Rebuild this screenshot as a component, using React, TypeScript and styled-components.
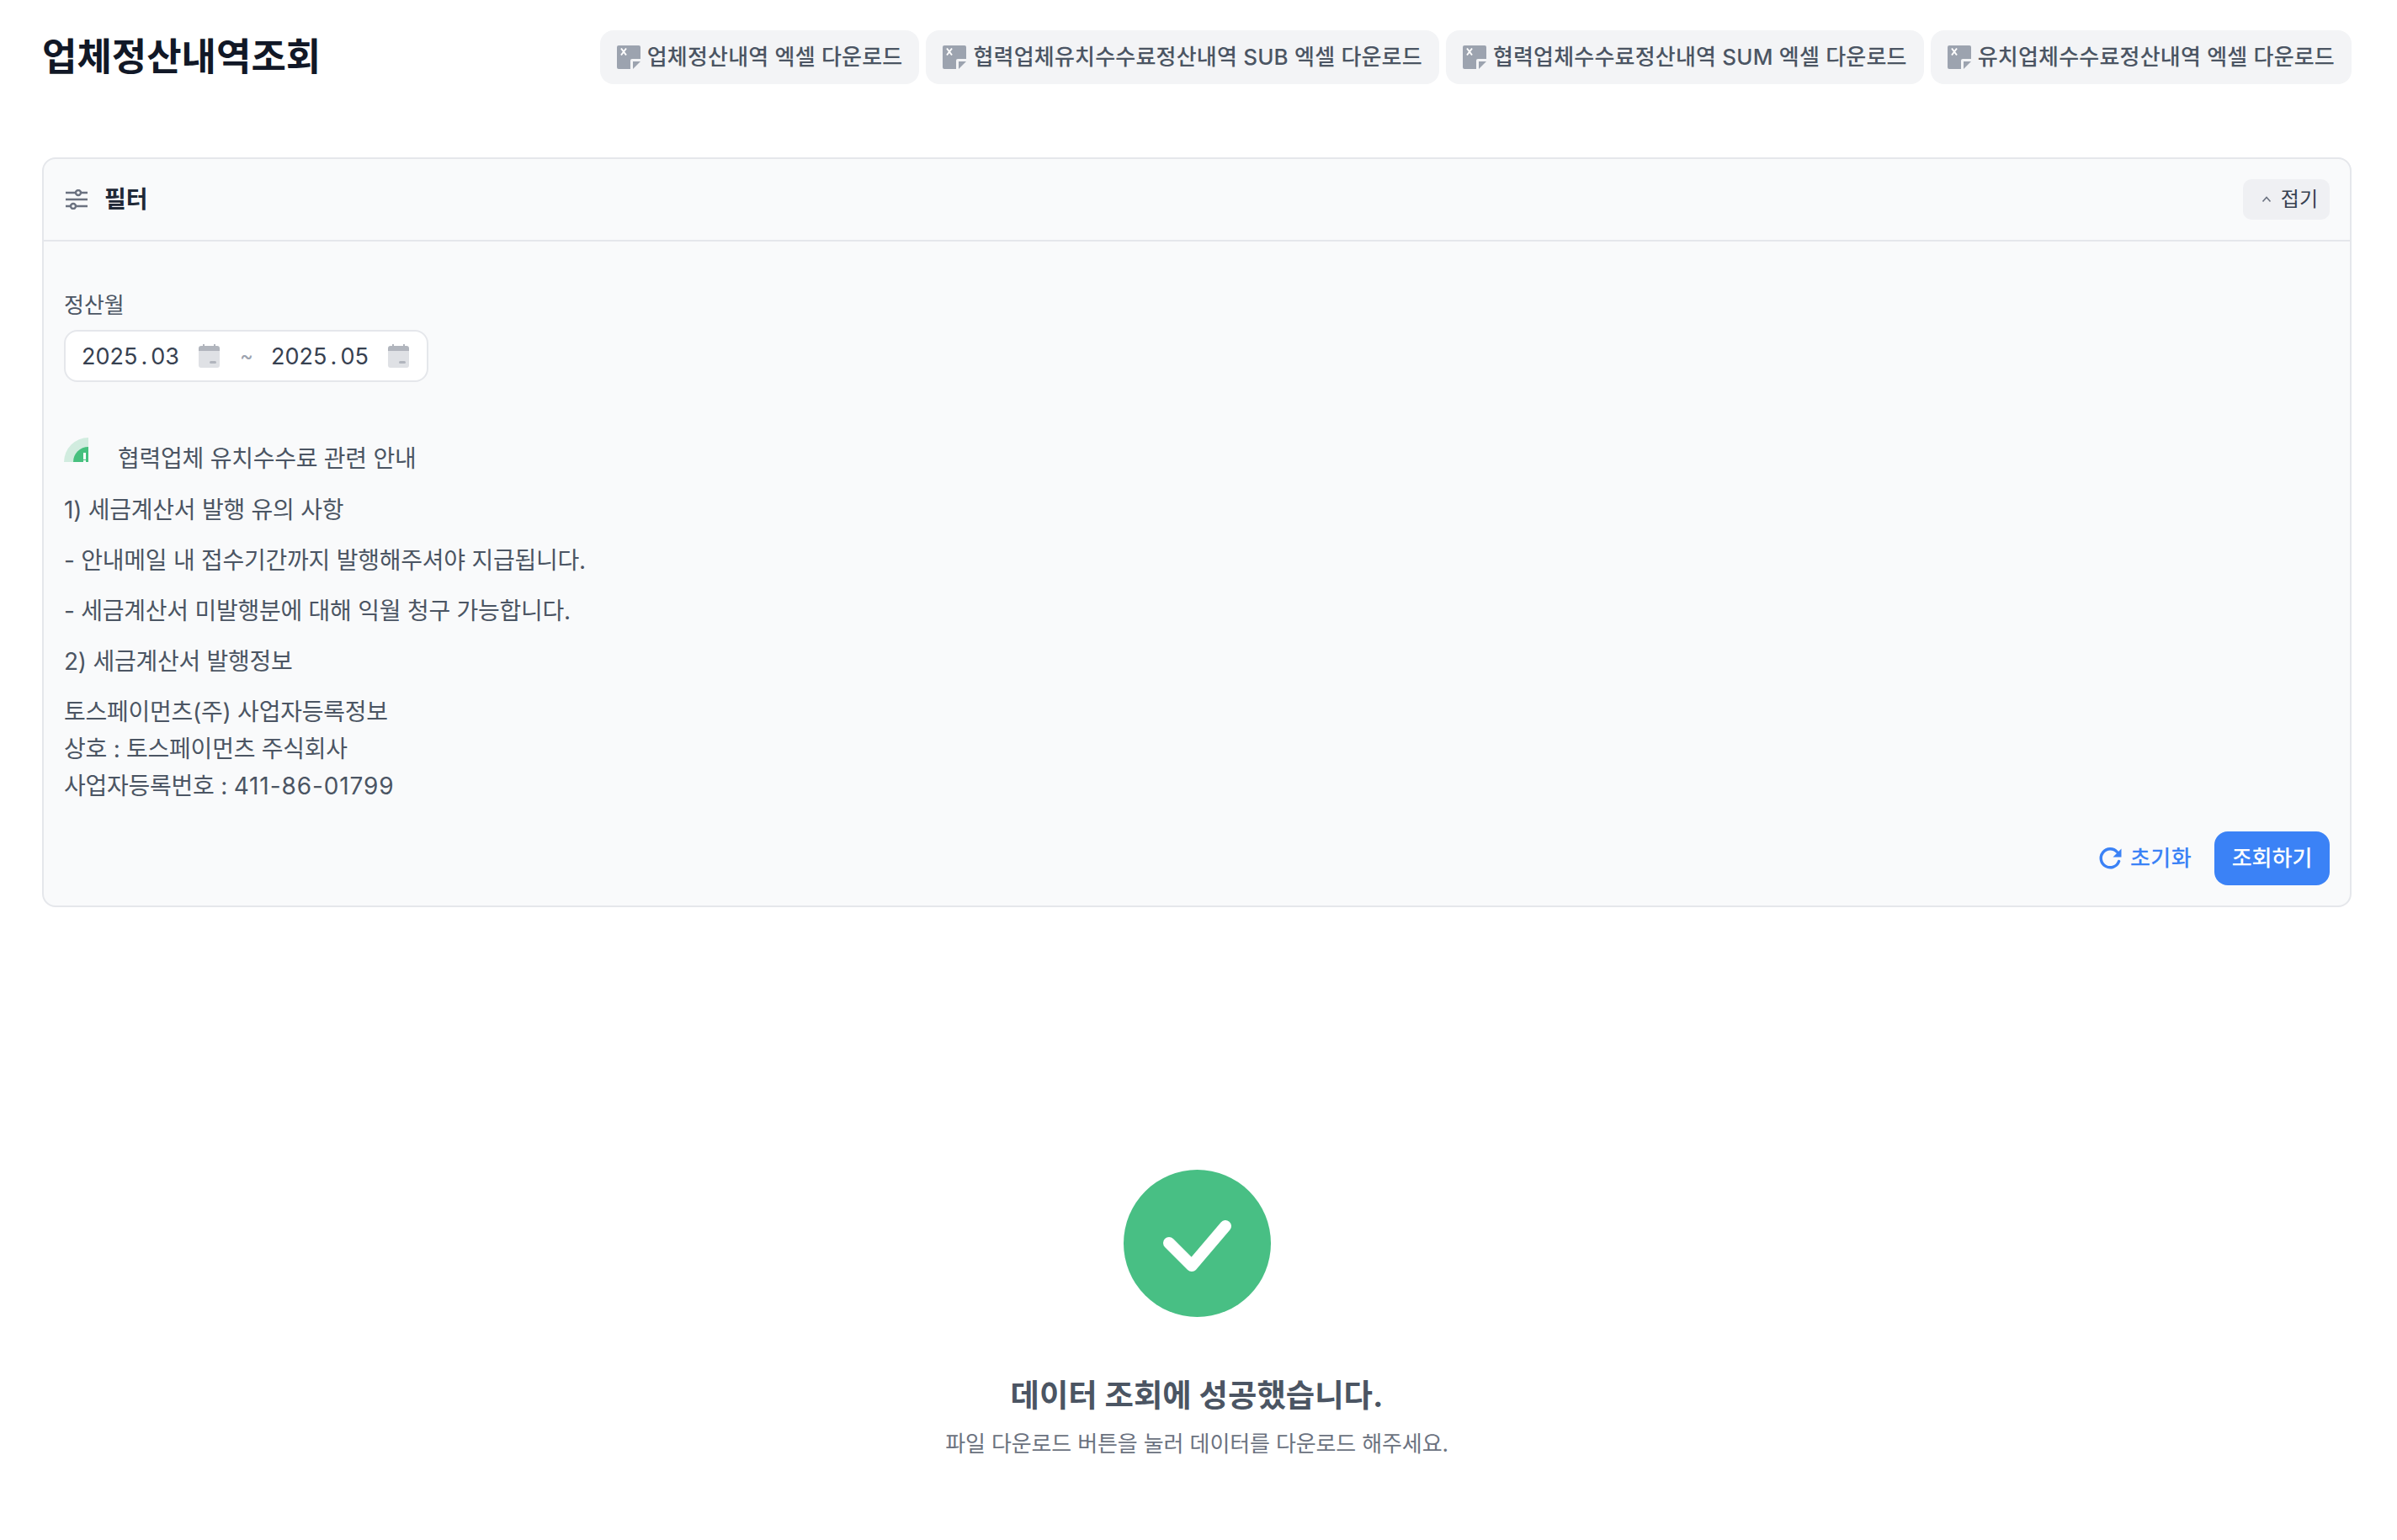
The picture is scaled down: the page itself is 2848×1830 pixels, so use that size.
import React from "react";
import styled, { createGlobalStyle } from "styled-components";

const GlobalStyle = createGlobalStyle`
  html, body {
    margin: 0;
    padding: 0;
    background: #fff;
  }
  * {
    box-sizing: border-box;
  }
  body {
    font-family: Inter, "Noto Sans CJK KR", sans-serif;
    -webkit-font-smoothing: antialiased;
  }
`;

const Page = styled.div`
  width: 2848px;
  height: 1830px;
  padding: 36px 54px 0 50px;
`;

const TopBar = styled.header`
  display: flex;
  justify-content: space-between;
  align-items: center;
  height: 64px;
`;

const Title = styled.h1`
  margin: 0;
  font-size: 45px;
  font-weight: 700;
  line-height: 64px;
  color: #111827;
`;

const Downloads = styled.div`
  display: flex;
  gap: 8px;
`;

const DownloadButton = styled.button`
  display: flex;
  align-items: center;
  gap: 8px;
  height: 64px;
  padding: 0 20px;
  border: none;
  border-radius: 16px;
  background: #f3f4f6;
  color: #4b5563;
  font: 500 26px/40px Inter, "Noto Sans CJK KR", sans-serif;
  letter-spacing: 0.2px;
  white-space: nowrap;
`;

const FilterCard = styled.section`
  margin-top: 87px;
  height: 891px;
  border: 2px solid #e5e7eb;
  border-radius: 16px;
  background: #f9fafb;
  display: flex;
  flex-direction: column;
`;

const FilterHeader = styled.div`
  display: flex;
  justify-content: space-between;
  align-items: center;
  height: 98px;
  flex: none;
  padding: 0 24px 0 26px;
  border-bottom: 2px solid #e5e7eb;
`;

const FilterTitle = styled.div`
  display: flex;
  align-items: center;
  gap: 20px;
  font-size: 28px;
  font-weight: 600;
  line-height: 40px;
  color: #1f2937;
`;

const CollapseButton = styled.button`
  display: flex;
  align-items: center;
  gap: 10px;
  height: 48px;
  padding: 0 14px 0 21px;
  border: none;
  border-radius: 10px;
  background: #eff0f3;
  color: #374151;
  font: 400 24px/32px Inter, "Noto Sans CJK KR", sans-serif;
`;

const FilterBody = styled.div`
  flex: 1;
  display: flex;
  flex-direction: column;
  padding: 62px 24px 24px;
`;

const FieldLabel = styled.label`
  display: block;
  font-size: 26px;
  line-height: 28px;
  color: #4b5563;
`;

const DateRange = styled.div`
  display: flex;
  align-items: center;
  width: 433px;
  height: 62px;
  margin-top: 15px;
  padding: 0 19px;
  border: 2px solid #e5e7eb;
  border-radius: 16px;
  background: #fff;
`;

const MonthValue = styled.span`
  width: 116px;
  margin-top: 2px;
  display: flex;
  justify-content: space-between;
  font-size: 27px;
  line-height: 40px;
  color: #374151;
`;

const Tilde = styled.span`
  width: 61px;
  padding-left: 24px;
  font-size: 24px;
  line-height: 40px;
  color: #9ca3af;
`;

const Notice = styled.div`
  margin-top: 66px;
  color: #4b5563;
  font-size: 28px;
  line-height: 44px;
  letter-spacing: -0.25px;
`;

const NoticeHead = styled.div`
  display: flex;
  align-items: flex-start;
  gap: 35px;
  height: 44px;
  margin-bottom: 20px;
`;

const NoticeHeadText = styled.span`
  margin-top: 3px;
`;

const NoticeLine = styled.p`
  margin: 0 0 16px;
`;

const BusinessNumber = styled.span`
  letter-spacing: 0.9px;
`;

const Actions = styled.div`
  margin-top: auto;
  display: flex;
  justify-content: flex-end;
  align-items: center;
  gap: 27px;
`;

const ResetButton = styled.button`
  display: flex;
  align-items: center;
  gap: 9px;
  padding: 0;
  border: none;
  background: none;
  color: #3b82f6;
  font: 500 26px/40px Inter, "Noto Sans CJK KR", sans-serif;
  letter-spacing: 0.4px;
`;

const SearchButton = styled.button`
  width: 137px;
  height: 64px;
  border: none;
  border-radius: 16px;
  background: #3b82f6;
  color: #fff;
  font: 500 26px/40px Inter, "Noto Sans CJK KR", sans-serif;
`;

const Result = styled.div`
  display: flex;
  flex-direction: column;
  align-items: center;
  margin-top: 312px;
`;

const ResultTitle = styled.h2`
  margin: 66px 0 0;
  font-size: 37.4px;
  line-height: 56px;
  font-weight: 700;
  color: #4b5563;
`;

const ResultText = styled.p`
  margin: 5px 0 0;
  font-size: 26px;
  line-height: 48px;
  letter-spacing: -0.13px;
  color: #6b7280;
`;

const CalendarSvg = styled.svg`
  flex: none;
  margin-left: 23px;
`;

const ExcelIcon = () => (
  <svg width="28" height="28" viewBox="0 0 28 28">
    <path d="M2 0h24a2 2 0 0 1 2 2v14H18a2 2 0 0 0-2 2v10H2a2 2 0 0 1-2-2V2a2 2 0 0 1 2-2z" fill="#9ca3af" />
    <path d="M19 19h9l-9 9z" fill="#9ca3af" />
    <path d="M5 3.5l6 8M11 3.5l-6 8" stroke="#fff" strokeWidth="2" fill="none" />
  </svg>
);

const SlidersIcon = () => (
  <svg width="26" height="24" viewBox="0 0 26 24" fill="none" stroke="#6b7280" strokeWidth="2.4">
    <path d="M0 4h26M0 12h26M0 20h26" />
    <circle cx="15" cy="4" r="3" fill="#f9fafb" />
    <circle cx="9" cy="20" r="3" fill="#f9fafb" />
  </svg>
);

const ChevronIcon = () => (
  <svg width="14" height="14" viewBox="0 0 14 14" fill="none" stroke="#6b7280" strokeWidth="1.6">
    <path d="M2.5 9.5L7 4.5l4.5 5" />
  </svg>
);

const CalendarIcon = () => (
  <CalendarSvg width="25" height="28" viewBox="0 0 25 28">
    <path d="M0 8h25v17a3 3 0 0 1-3 3H3a3 3 0 0 1-3-3z" fill="#dfe1e5" />
    <path d="M0 8V5a3 3 0 0 1 3-3h2V0h2v2h11V0h2v2h2a3 3 0 0 1 3 3v3z" fill="#b1b5bd" />
    <rect x="13" y="20" width="8" height="3" rx="1.5" fill="#b1b5bd" />
  </CalendarSvg>
);

const NoticeIcon = () => (
  <svg width="29" height="29" viewBox="0 0 29 29">
    <path d="M29 0v29H0A29 29 0 0 1 29 0z" fill="#d1ecdf" />
    <path d="M29 11v18H11a18 18 0 0 1 18-18z" fill="#46c07e" />
    <rect x="23" y="18" width="3" height="8" fill="#fff" />
    <rect x="23" y="27" width="3" height="2" fill="#fff" />
  </svg>
);

const RefreshIcon = () => (
  <svg width="28" height="28" viewBox="0 0 28 28" fill="none">
    <path d="M23.6 17.5A11 11 0 1 1 21.5 6.5" stroke="#3b82f6" strokeWidth="3.4" strokeLinecap="round" />
    <path d="M26.5 2.5v10h-10z" fill="#3b82f6" />
  </svg>
);

const SuccessIcon = () => (
  <svg width="175" height="175" viewBox="0 0 175 175">
    <circle cx="87.5" cy="87.5" r="87.5" fill="#48bf84" />
    <path d="M54 87l27 27 40-47" fill="none" stroke="#fff" strokeWidth="14" strokeLinecap="round" strokeLinejoin="round" />
  </svg>
);

const downloads = [
  "업체정산내역 엑셀 다운로드",
  "협력업체유치수수료정산내역 SUB 엑셀 다운로드",
  "협력업체수수료정산내역 SUM 엑셀 다운로드",
  "유치업체수수료정산내역 엑셀 다운로드",
];

const Month = ({ year, month }: { year: string; month: string }) => (
  <MonthValue>
    <span>{year}</span>
    <span>.</span>
    <span>{month}</span>
  </MonthValue>
);

export default function App() {
  return (
    <Page>
      <GlobalStyle />
      <TopBar>
        <Title>업체정산내역조회</Title>
        <Downloads>
          {downloads.map((label) => (
            <DownloadButton key={label}>
              <ExcelIcon />
              {label}
            </DownloadButton>
          ))}
        </Downloads>
      </TopBar>

      <FilterCard>
        <FilterHeader>
          <FilterTitle>
            <SlidersIcon />
            필터
          </FilterTitle>
          <CollapseButton>
            <ChevronIcon />
            접기
          </CollapseButton>
        </FilterHeader>
        <FilterBody>
          <FieldLabel>정산월</FieldLabel>
          <DateRange>
            <Month year="2025" month="03" />
            <CalendarIcon />
            <Tilde>~</Tilde>
            <Month year="2025" month="05" />
            <CalendarIcon />
          </DateRange>
          <Notice>
            <NoticeHead>
              <NoticeIcon />
              <NoticeHeadText>협력업체 유치수수료 관련 안내</NoticeHeadText>
            </NoticeHead>
            <NoticeLine>1) 세금계산서 발행 유의 사항</NoticeLine>
            <NoticeLine>- 안내메일 내 접수기간까지 발행해주셔야 지급됩니다.</NoticeLine>
            <NoticeLine>- 세금계산서 미발행분에 대해 익월 청구 가능합니다.</NoticeLine>
            <NoticeLine>2) 세금계산서 발행정보</NoticeLine>
            <div>토스페이먼츠(주) 사업자등록정보</div>
            <div>상호 : 토스페이먼츠 주식회사</div>
            <div>
              사업자등록번호 : <BusinessNumber>411-86-01799</BusinessNumber>
            </div>
          </Notice>
          <Actions>
            <ResetButton>
              <RefreshIcon />
              초기화
            </ResetButton>
            <SearchButton>조회하기</SearchButton>
          </Actions>
        </FilterBody>
      </FilterCard>

      <Result>
        <SuccessIcon />
        <ResultTitle>데이터 조회에 성공했습니다.</ResultTitle>
        <ResultText>파일 다운로드 버튼을 눌러 데이터를 다운로드 해주세요.</ResultText>
      </Result>
    </Page>
  );
}
